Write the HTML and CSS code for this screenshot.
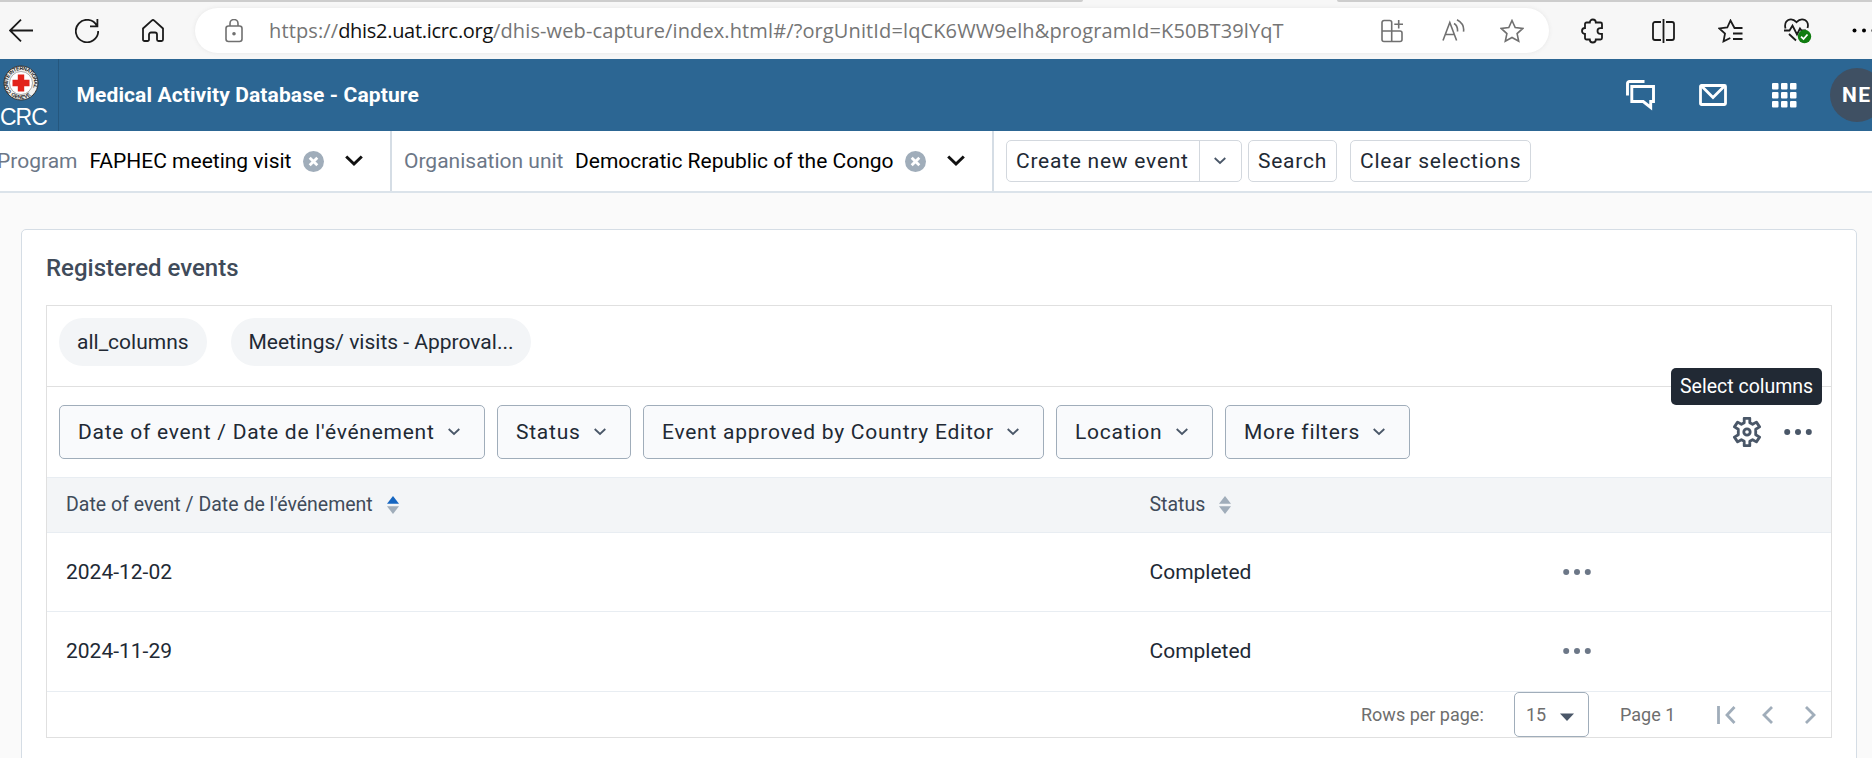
FILE: index.html
```html
<!DOCTYPE html>
<html lang="en">
<head>
<meta charset="utf-8">
<title>Medical Activity Database - Capture</title>
<link rel="stylesheet" href="styles.css">
</head>
<body>
<svg class="defs" width="0" height="0">
  <symbol id="chev" viewBox="0 0 12 8"><path d="M.7 1l5.300 5 5.300-5" fill="none" stroke="#4a5768" stroke-width="1.800"/></symbol>
  <symbol id="chev-bold" viewBox="0 0 18 12"><path d="M1.200 1.500L9 9l7.800-7.500" fill="none" stroke="#111" stroke-width="3"/></symbol>
  <symbol id="clear" viewBox="0 0 21 21"><circle cx="10.500" cy="10.500" r="10.500" fill="#a0adba"/><path d="M6.700 6.700l7.600 7.600M14.300 6.700l-7.600 7.600" stroke="#fff" stroke-width="2.800"/></symbol>
  <symbol id="dots" viewBox="0 0 28 8"><circle cx="3.200" cy="4" r="3"/><circle cx="14" cy="4" r="3"/><circle cx="24.800" cy="4" r="3"/></symbol>
</svg>

<div class="browser">
  <div class="tabs"><div class="tab-left"></div><div class="tab-right"></div></div>
  <div class="toolbar">
    <svg class="ic back" width="24" height="24" viewBox="0 0 24 24"><path d="M24 11.500H1M12 .7L1 11.500 12 22.300"/></svg>
    <svg class="ic reload" width="24" height="24" viewBox="0 0 24 24"><path d="M22 7A11.200 11.200 0 1 0 23.200 12M22.400 0v7.300H15"/></svg>
    <svg class="ic home" width="22" height="24" viewBox="0 0 22 24"><path d="M1 9.500L9.700 1.600a2 2 0 0 1 2.600 0L21 9.500v11a1.500 1.500 0 0 1-1.500 1.500h-3a1.500 1.500 0 0 1-1.500-1.500v-5a2 2 0 0 0-2-2h-4a2 2 0 0 0-2 2v5A1.500 1.500 0 0 1 5.500 22h-3A1.500 1.500 0 0 1 1 20.500z"/></svg>
    <div class="address">
      <svg class="ic grey lock" width="18" height="24" viewBox="0 0 18 24"><rect x="1" y="7" width="16" height="15.500" rx="2.500"/><path d="M5 7V4.500a4 4 0 0 1 8 0V7"/><circle cx="9" cy="14.700" r="1" fill="#666"/></svg>
      <span class="url">https://<b>dhis2.uat.icrc.org</b>/dhis-web-capture/index.html#/?orgUnitId=lqCK6WW9elh&amp;programId=K50BT39lYqT</span>
      <svg class="ic grey apps" width="22" height="24" viewBox="0 0 22 24"><path d="M10.700 22.500V3.500a2 2 0 0 0-2-2H3a2 2 0 0 0-2 2v17a2 2 0 0 0 2 2h16a2 2 0 0 0 2-2V14a2 2 0 0 0-2-2H1M17.700 1v8.500M13.300 5.200H22"/></svg>
      <svg class="ic grey read" width="23" height="24" viewBox="0 0 23 24"><path d="M1 21.500L7.800 3.500l6.800 18M3.500 15.500h8.800M12 4.500c2.500 1.500 3.800 4.500 3.500 8M15 .8c4.500 2.500 7.300 7 6.500 11.800"/></svg>
      <svg class="ic grey star" width="24" height="24" viewBox="0 0 24 24"><path d="M12 1.500l3.200 7 7.600.9-5.700 5.200 1.600 7.700L12 18.500l-6.700 3.800 1.600-7.700L1.200 9.400l7.600-.9z"/></svg>
    </div>
    <svg class="ic puzzle" width="22" height="26" viewBox="0 0 22 26"><path d="M8.800 4.500a3 3 0 0 1 6 0h4.700a1.500 1.500 0 0 1 1.500 1.500v4.200h-1.700a2.800 2.800 0 0 0 0 5.600H21V20a1.500 1.500 0 0 1-1.500 1.500h-4.700a3 3 0 0 1-6 0H5.500A1.500 1.500 0 0 1 4 20v-4a3 3 0 0 1 0-6V6a1.500 1.500 0 0 1 1.500-1.500z"/></svg>
    <span class="sep"></span>
    <svg class="ic split" width="23" height="26" viewBox="0 0 23 26"><path d="M9 4H3a2 2 0 0 0-2 2v14a2 2 0 0 0 2 2h6M14 4h6a2 2 0 0 1 2 2v14a2 2 0 0 1-2 2h-6M11.500 1v24"/></svg>
    <svg class="ic favs" width="25" height="24" viewBox="0 0 25 24"><path d="M24.500 9h-8l-4-7.500-3.200 7-8 .9 5.700 5.200-1.500 7.700 6.800-3.300M15 14.500h9.500M15 20h9.500"/></svg>
    <svg class="ic heart" width="28" height="26" viewBox="0 0 28 26"><path d="M1.500 10.500C0 5 3 1.300 7 1.300c2.500 0 4 1.200 5.500 2.800C14 2.500 15.500 1.300 18 1.300c4.500 0 7 4 5.500 8.700M0 12.500h5.500l3-5 4.500 9 3-6 1.500 2H22M5 16l7 6.500"/><circle cx="20.500" cy="18.500" r="6.700" fill="#107c10" stroke="none"/><path d="M17 18.700l2.500 2.300 4-4.500" stroke="#fff"/></svg>
    <svg class="ic-menu" width="24" height="5" viewBox="0 0 24 5"><circle cx="2.500" cy="2.500" r="2"/><circle cx="12" cy="2.500" r="2"/><circle cx="21.500" cy="2.500" r="2"/></svg>
  </div>
</div>

<header class="header">
  <div class="logo">
    <svg width="36" height="36" viewBox="0 0 36 36">
      <circle cx="18" cy="18" r="17" fill="#f1f1ee" stroke="#333" stroke-width="1"/>
      <circle cx="18" cy="18" r="11.500" fill="#fff" stroke="#777" stroke-width=".6"/>
      <path id="ring-top" d="M8.500 27A13 13 0 1 1 27.500 27" fill="none"/>
      <path id="ring-bottom" d="M7 29.500A16.200 16.200 0 0 0 29 29.500" fill="none"/>
      <text class="seal"><textPath href="#ring-top" textLength="55">COMITE INTERNATIONAL</textPath><textPath href="#ring-bottom" startOffset="1">GENEVE</textPath></text>
      <path d="M14.800 9.500h6.400v5.300h5.300v6.400h-5.300v5.300h-6.400v-5.300H9.500v-6.400h5.300z" fill="#e2231a"/>
    </svg>
    <span class="logo-text">CRC</span>
  </div>
  <h1 class="app-title"><span>Medical Activity Database - Capture</span></h1>
  <svg class="h-chat" width="32" height="32" viewBox="0 0 32 32" fill="none" stroke="#fff"><path d="M2.500 16.500V4.500a2 2 0 0 1 2-2H19.500" stroke-width="2.900"/><path d="M8 7.500h20.500v15h-2.800v6l-7.500-6H6.800v-15z" stroke-width="2.900"/></svg>
  <svg class="h-mail" width="28" height="22" viewBox="0 0 28 22" fill="none" stroke="#fff" stroke-width="2.800"><rect x="1.500" y="1.500" width="25" height="19" rx="1"/><path d="M3 2.500l11 11 11-11"/></svg>
  <svg class="h-apps" width="25" height="25" viewBox="0 0 25 25" fill="#fff"><rect width="6.500" height="6.500" rx="1"/><rect x="9" width="6.500" height="6.500" rx="1"/><rect x="18" width="6.500" height="6.500" rx="1"/><rect y="9" width="6.500" height="6.500" rx="1"/><rect x="9" y="9" width="6.500" height="6.500" rx="1"/><rect x="18" y="9" width="6.500" height="6.500" rx="1"/><rect y="18" width="6.500" height="6.500" rx="1"/><rect x="9" y="18" width="6.500" height="6.500" rx="1"/><rect x="18" y="18" width="6.500" height="6.500" rx="1"/></svg>
  <div class="avatar">NE</div>
</header>

<div class="selector">
  <div class="sel sel-program">
    <span class="label">Program</span><span class="value v-program">FAPHEC meeting visit</span>
    <svg class="x" width="21" height="21"><use href="#clear"/></svg><svg class="c" width="18" height="12"><use href="#chev-bold"/></svg>
  </div>
  <div class="sel sel-org">
    <span class="label l-org">Organisation unit</span><span class="value v-org">Democratic Republic of the Congo</span>
    <svg class="x" width="21" height="21"><use href="#clear"/></svg><svg class="c" width="18" height="12"><use href="#chev-bold"/></svg>
  </div>
  <div class="actions">
    <div class="btn split-btn"><span class="main-act">Create new event</span><span class="drop"><svg width="12" height="8"><use href="#chev"/></svg></span></div>
    <div class="btn b-search">Search</div>
    <div class="btn b-clear">Clear selections</div>
  </div>
</div>

<main class="page">
  <section class="card">
    <h2 class="card-title"><span>Registered events</span></h2>
    <div class="list">
      <div class="chips"><span class="chip chip-a">all_columns</span><span class="chip chip-b">Meetings/ visits - Approval...</span></div>
      <div class="filters">
        <div class="filter f-date"><span>Date of event / Date de l'événement</span><svg width="12" height="8"><use href="#chev"/></svg></div>
        <div class="filter f-status"><span>Status</span><svg width="12" height="8"><use href="#chev"/></svg></div>
        <div class="filter f-appr"><span>Event approved by Country Editor</span><svg width="12" height="8"><use href="#chev"/></svg></div>
        <div class="filter f-loc"><span>Location</span><svg width="12" height="8"><use href="#chev"/></svg></div>
        <div class="filter f-more"><span>More filters</span><svg width="12" height="8"><use href="#chev"/></svg></div>
        <div class="tools">
          <div class="gear">
            <svg width="30" height="30" viewBox="0 0 30 30" fill="none" stroke="#4a5768" stroke-width="2.800" stroke-linejoin="round"><path d="M12.200 1.300h5.600v4.400l2.800 1.600 3.800-2.200 3.200 4.800-3.900 2.400v5.400l3.900 2.400-3.200 4.800-3.800-2.200-2.800 1.600v4.400h-5.600v-4.400l-2.800-1.600-3.800 2.200-3.200-4.800 3.900-2.400v-5.400L2.400 9.900l3.200-4.800 3.800 2.200 2.800-1.600z"/><circle cx="15" cy="15" r="3.200"/></svg>
            <div class="tooltip"><span>Select columns</span></div>
          </div>
          <svg class="more" width="28" height="8"><use href="#dots"/></svg>
        </div>
      </div>
      <div class="table">
        <div class="row head">
          <div class="cell"><span class="th-date">Date of event / Date de l'événement</span><svg class="sort" width="12" height="18" viewBox="0 0 12 18"><path d="M0 7.700L6 0l6 7.700z" fill="#1565c0"/><path d="M0 10.300L6 18l6-7.700z" fill="#a0adba"/></svg></div>
          <div class="cell"><span class="th-status">Status</span><svg class="sort" width="12" height="18" viewBox="0 0 12 18" fill="#a0adba"><path d="M0 7.700L6 0l6 7.700zM0 10.300L6 18l6-7.700z"/></svg></div>
          <div class="cell"></div>
        </div>
        <div class="row"><div class="cell">2024-12-02</div><div class="cell">Completed</div><div class="cell"><svg class="row-more" width="28" height="8"><use href="#dots"/></svg></div></div>
        <div class="row last"><div class="cell">2024-11-29</div><div class="cell">Completed</div><div class="cell"><svg class="row-more" width="28" height="8"><use href="#dots"/></svg></div></div>
      </div>
      <div class="pager">
        <span class="rpp">Rows per page:</span>
        <div class="select"><span>15</span><svg width="14" height="8" viewBox="0 0 14 8"><path d="M0 .5h14L7 8z" fill="#4a5768"/></svg></div>
        <span class="pg">Page 1</span>
        <svg class="first" width="19" height="18" viewBox="0 0 19 18"><path d="M1.500 0v18M17.500 1L10 9l7.500 8"/></svg>
        <svg class="prev" width="11" height="18" viewBox="0 0 11 18"><path d="M10 1L2 9l8 8"/></svg>
        <svg class="next" width="11" height="18" viewBox="0 0 11 18"><path d="M1 1l8 8-8 8"/></svg>
      </div>
    </div>
  </section>
</main>
</body>
</html>
```
FILE: styles.css
```css
* { box-sizing: border-box; }
html, body { margin: 0; height: 758px; overflow: hidden; }
body { background: #fafafa; font-family: Roboto, sans-serif; font-size: 21px; color: #212934; display: flex; flex-direction: column; white-space: nowrap; }
svg { flex: none; display: block; }
.defs { position: absolute; }

/* Browser chrome */
.browser { height: 59px; flex: none; background: #f7f7f7; }
.tabs { display: flex; justify-content: space-between; height: 2px; }
.tab-left { width: 1083px; background: #cdcdcd; border-radius: 0 0 3px 0; }
.tab-right { width: 535px; background: #cdcdcd; border-radius: 0 0 0 3px; }
.toolbar { display: flex; align-items: center; height: 57px; padding-left: 9px; }
.ic { fill: none; stroke: #1b1b1b; stroke-width: 1.8; }
.grey { stroke: #707070; stroke-width: 1.6; }
.reload { margin-left: 42px; }
.home { margin-left: 43px; }
.address { display: flex; align-items: center; flex: none; width: 1354px; height: 45px; margin-left: 31px; padding-left: 30px; border-radius: 23px; background: #fff; box-shadow: 0 0 4px #e6e6e6; }
.url { width: 1014px; margin-left: 26px; font-family: "Open Sans", "Noto Sans", sans-serif; font-size: 20px; letter-spacing: 0.12px; color: #757575; }
.url b { font-weight: 400; color: #111; letter-spacing: -0.3px; }
.apps { margin-left: 98px; }
.read { margin-left: 39px; }
.star { margin-left: 35px; }
.puzzle { margin-left: 32px; }
.sep { width: 2px; height: 24px; margin-left: 25px; background: #cfcfcf; }
.split { margin-left: 24px; }
.favs { margin-left: 43px; }
.heart { margin-left: 41px; }
.ic-menu { margin-left: 40px; }

/* Header bar */
.header { display: flex; align-items: center; height: 72px; flex: none; background: #2c6693; color: #fff; overflow: hidden; }
.logo { flex: none; width: 59px; height: 72px; padding: 6px 0 0 3px; border-right: 1px solid #25577e; }
.logo-text { display: block; margin: 3px 0 0 -3px; font: 23px/26px "Liberation Sans", sans-serif; letter-spacing: -1px; }
.seal { font: bold 5.2px "Liberation Sans", sans-serif; fill: #222; }
.app-title { flex: none; width: 1549px; margin: 0; padding-left: 17.5px; font-size: 21px; font-weight: 700; letter-spacing: 0.11px; }
.h-chat { margin-left: 17px; }
.h-mail { margin-left: 42px; }
.h-apps { margin-left: 45px; }
.avatar { flex: none; width: 54px; height: 54px; margin-left: 33px; padding-left: 12px; border-radius: 50%; background: #3f5063; font-size: 21px; line-height: 54px; font-weight: 700; letter-spacing: 1.5px; }

/* Selector bar */
.selector { display: flex; flex: none; height: 62px; background: #fff; border-bottom: 2px solid #dbe3ea; }
.sel { display: flex; align-items: center; flex: none; border-right: 2px solid #d5dde5; }
.sel-program { width: 392px; }
.sel-org { width: 602px; padding-left: 12px; }
.label { width: 80px; margin-left: -3px; color: #6c7787; }
.l-org { width: 160px; margin-left: 0; }
.value { margin-left: 12.5px; color: #000; }
.v-program { width: 203.5px; }
.v-org { width: 320px; margin-left: 11px; }
.x { margin-left: 10px; }
.c { margin-left: 21px; }
.actions { display: flex; align-items: center; padding-left: 12px; }
.btn { display: flex; align-items: center; height: 42px; border: 1px solid #d3d8de; border-radius: 5px; background: #fff; letter-spacing: 0.75px; }
.split-btn { width: 236px; }
.main-act { width: 192px; padding-left: 9px; }
.drop { display: flex; align-items: center; height: 40px; width: 42px; padding-left: 14px; border-left: 1px solid #d3d8de; }
.b-search { width: 89px; margin-left: 6px; padding-left: 9px; }
.b-clear { width: 181px; margin-left: 13px; padding-left: 9px; }

/* Card */
.page { padding: 36px 15px 0 21px; }
.card { height: 560px; padding: 0 24px; border: 1px solid #d5dde5; border-radius: 5px; background: #fff; }
.card-title { height: 75px; margin: 0; padding-top: 1px; font-size: 24px; line-height: 75px; font-weight: 500; color: #404b5a; }
.list { height: 433px; border: 1px solid #e0e0e0; }
.chips { display: flex; height: 81px; padding: 12px 0 0 12px; border-bottom: 1px solid #e0e0e0; }
.chip { height: 48px; padding-left: 18px; border-radius: 24px; background: #f3f5f7; line-height: 48px; }
.chip-a { width: 148px; }
.chip-b { width: 300px; margin-left: 24px; padding-left: 17.5px; }
.filters { display: flex; gap: 12px; height: 90px; padding: 18px 0 0 12px; }
.filter { display: flex; align-items: center; height: 54px; padding: 0 24px 0 18px; border: 1px solid #a0adba; border-radius: 5px; background: #f9fafc; letter-spacing: 0.75px; }
.filter svg { margin-left: auto; }
.f-date { width: 426px; }
.f-status { width: 134px; }
.f-appr { width: 401px; }
.f-loc { width: 157px; }
.f-more { width: 185px; }
.tools { display: flex; align-items: center; height: 54px; margin-left: auto; padding-right: 19px; gap: 22px; }
.gear { position: relative; }
.tooltip { position: absolute; left: -61px; top: -49px; width: 151px; height: 37px; padding-left: 9px; border-radius: 5px; background: #212934; color: #fff; font-size: 19.5px; line-height: 37px; }
.more { fill: #4a5768; }
.row { display: grid; grid-template-columns: 1083.5px 412.5px 1fr; height: 79px; border-bottom: 1px solid #e8edf2; }
.row.last { height: 80px; padding-bottom: 2px; }
.row.head { height: 56px; padding-bottom: 1px; border-top: 1px solid #e8edf2; background: #f3f5f7; color: #404b5a; font-size: 19.5px; }
.cell { display: flex; align-items: center; padding-left: 19px; }
.cell:last-child { padding-left: 20px; }
.sort { margin-left: 14px; }
.row-more { fill: #6c7787; }
.pager { display: flex; align-items: center; height: 45px; padding-left: 1314px; color: #6e6e6e; font-size: 18px; }
.rpp { width: 153px; flex: none; padding-bottom: 1px; }
.select { display: flex; align-items: center; flex: none; width: 75px; height: 45px; padding-left: 11px; border: 1px solid #a0adba; border-radius: 5px; }
.select svg { margin: 4px 0 0 14px; }
.pg { width: 56px; margin-left: 31px; padding-bottom: 1px; }
.pager > svg { fill: none; stroke: #a0adba; stroke-width: 2.8; }
.first { margin-left: 41px; }
.prev { margin-left: 26px; }
.next { margin-left: 32px; }
```
